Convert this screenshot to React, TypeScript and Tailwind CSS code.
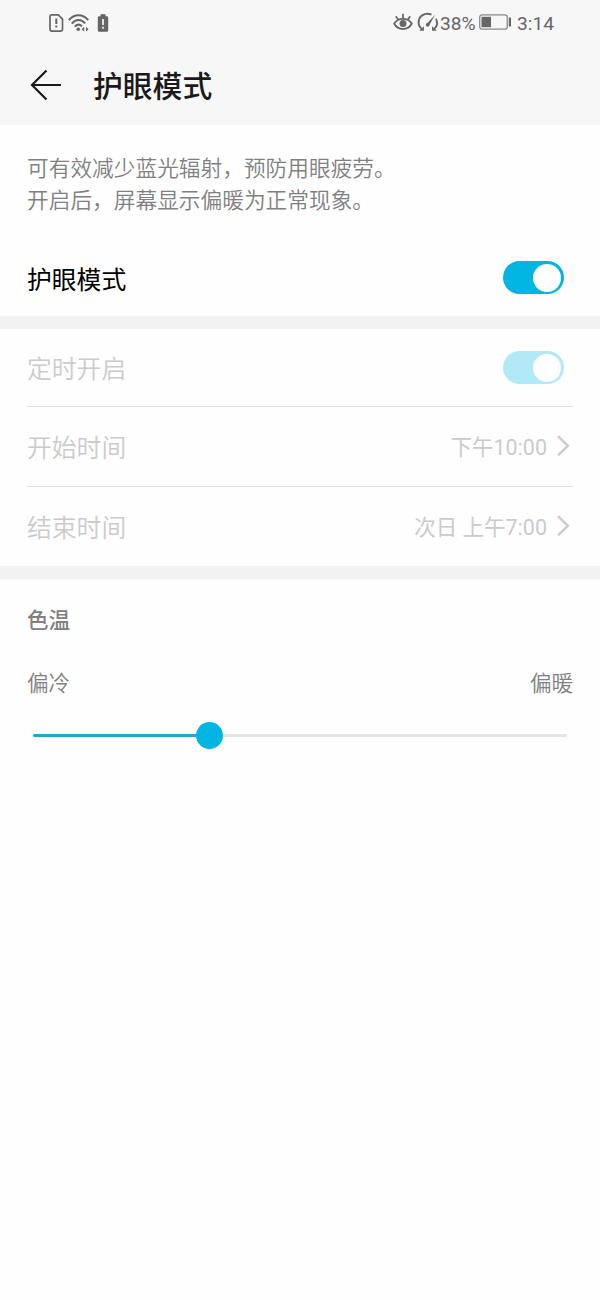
import clsx from "clsx";
import { useState } from "react";

interface SwitchProps {
  checked: boolean;
  disabled?: boolean;
  label: string;
  onChange?: (checked: boolean) => void;
}

/**
 * Pill switch, faded while disabled.
 */
const Switch = ({ checked, disabled, label, onChange }: SwitchProps) => (
  <button
    type="button"
    role="switch"
    aria-checked={checked}
    aria-label={label}
    disabled={disabled}
    onClick={() => onChange?.(!checked)}
    className={clsx(
      "flex h-[33px] w-[61px] items-center rounded-full px-[3px]",
      checked ? "justify-end" : "justify-start",
      !checked && "bg-gray-300",
      checked && (disabled ? "bg-[#b2e9f6]" : "bg-[#00b5e2]")
    )}
  >
    <span className="size-7 rounded-full bg-white" />
  </button>
);

const StatusBar = () => (
  <div className="flex h-[45px] items-center justify-between pr-[46px] pl-[49px] text-[#666]">
    <div className="flex items-center">
      <svg width="15" height="20" viewBox="0 0 15 20" fill="none" stroke="currentColor">
        <path
          d="M3 1.9h6.3l4.2 4.2v10a2 2 0 0 1-2 2H3a2 2 0 0 1-2-2V3.900a2 2 0 0 1 2-2Z"
          strokeWidth="1.700"
        />
        <path d="M7.300 5.500v5.500M7.300 12.600v2" strokeWidth="2" />
      </svg>

      <svg
        width="22"
        height="20"
        viewBox="0 0 22 20"
        fill="none"
        stroke="currentColor"
        className="ml-[4px]"
      >
        <path
          d="M.8 7.200C6.200.7 14.800.7 20.200 7.200M3.800 10.600c4-4.800 9.600-4.800 13.400-.2M6.800 13.600c2.200-2.400 5-2.400 7.200-.4"
          strokeWidth="2"
        />
        <circle cx="10.300" cy="16.200" r="1.800" fill="currentColor" stroke="none" />
        <path
          d="M16.200 13.800v4.800l-2.600-2.400ZM18 13.800v4.800l2.600-2.400Z"
          fill="currentColor"
          stroke="none"
        />
      </svg>

      <svg width="12" height="20" viewBox="0 0 12 20" className="ml-[7px]">
        <path
          d="M3.500 1.200h5v2h1.300A1.400 1.400 0 0 1 11.200 4.600v12.800a1.400 1.400 0 0 1-1.400 1.400H2.200A1.400 1.400 0 0 1 .8 17.400V4.600a1.400 1.400 0 0 1 1.400-1.400h1.300Z"
          fill="currentColor"
        />
        <path d="M6 6v6M6 13.700v2" stroke="#f7f7f7" strokeWidth="1.700" />
      </svg>
    </div>

    <div className="flex items-center">
      <svg width="20" height="20" viewBox="0 0 20 20" fill="none" stroke="currentColor">
        <path
          d="M1.200 11.500C3 8.600 6 6.800 10 6.800s7 1.800 8.800 4.700C17 15 14 17 10 17s-7-2-8.800-5.500Z"
          strokeWidth="1.800"
        />
        <circle cx="10" cy="11.600" r="3.500" fill="currentColor" stroke="none" />
        <path d="M10 1.800V7M2.800 4.200l2.500 3.600M17.200 4.200l-2.500 3.600" strokeWidth="1.700" />
      </svg>

      <svg
        width="22"
        height="20"
        viewBox="0 0 22 20"
        fill="none"
        stroke="currentColor"
        className="ml-[4px]"
      >
        <path
          d="M14.500 2.700C7.800-.3 1.600 4.200 1.600 10.600c0 2.800 1.400 5.400 4.200 6.900M19 6.800c1.900 4.200 1.100 8.300-2.900 10.700"
          strokeWidth="1.900"
        />
        <path d="M2.800 18h3.500v-3.200M19.200 18h-3.500v-3.200" strokeWidth="1.300" />
        <path d="M18.300 2.500 9.500 12l2.300 1.900Z" fill="currentColor" stroke="none" />
        <circle cx="10.700" cy="12.800" r="1.900" fill="currentColor" stroke="none" />
      </svg>

      <span className="ml-px w-[36px] pt-0.5 text-[19.200px] leading-none">38%</span>

      <svg width="33" height="16" viewBox="0 0 33 16" className="ml-[3px]">
        <rect
          x=".7"
          y=".8"
          width="27.600"
          height="14.400"
          rx="2.500"
          fill="none"
          stroke="#8a8a8a"
          strokeWidth="1.300"
        />
        <rect x="2.500" y="2.800" width="9.500" height="10.400" fill="currentColor" />
        <rect x="29.800" y="3.500" width="2.200" height="9" rx=".6" fill="currentColor" />
      </svg>

      <span className="ml-[5px] pt-0.5 text-[19.200px] leading-none">3:14</span>
    </div>
  </div>
);

interface TimeRowProps {
  label: string;
  value: string;
}

const TimeRow = ({ label, value }: TimeRowProps) => (
  <div className="flex h-20 items-center border-t border-[#e0e0e0] text-[#cbcbcb]">
    <span className="pt-[4px] text-[24.800px]">{label}</span>
    <span className="ml-auto pt-[3px] text-[21.500px] font-normal">{value}</span>
    <svg
      width="14"
      height="22"
      viewBox="0 0 14 22"
      fill="none"
      stroke="currentColor"
      strokeWidth="2.400"
      className="mr-[3px] mb-px ml-[9px]"
    >
      <path d="m2 1.200 9.800 9.600L2 20.400" />
    </svg>
  </div>
);

const App = () => {
  const [enabled, setEnabled] = useState(true);
  const [temperature] = useState(33);

  return (
    <div className="min-h-[1300px] w-full bg-[#fefefe] font-['Roboto','Noto_Sans_CJK_SC',sans-serif] font-[350]">
      <header className="h-[125px] bg-[#f7f7f7] font-normal">
        <StatusBar />
        <div className="flex h-20 items-center pl-[30px] text-[#1a1a1a]">
          <svg
            width="32"
            height="32"
            viewBox="0 0 32 32"
            fill="none"
            stroke="currentColor"
            strokeWidth="2.200"
          >
            <path d="M31 16H2M16.500 1.500 2 16l14.500 14.500" />
          </svg>
          <h1 className="ml-[31px] pt-[5px] text-[29.800px] font-medium">护眼模式</h1>
        </div>
      </header>

      <section className="px-[27px]">
        <p className="h-[115px] pt-[28px] text-[21.700px] leading-8 whitespace-nowrap text-[#808080]">
          可有效减少蓝光辐射，预防用眼疲劳。
          <br />
          开启后，屏幕显示偏暖为正常现象。
        </p>
        <div className="flex h-[76px] items-center justify-between pr-[9px] pb-px">
          <span className="pt-[6px] text-[24.800px] font-normal text-black">护眼模式</span>
          <Switch checked={enabled} onChange={setEnabled} label="护眼模式" />
        </div>
      </section>

      {/* schedule */}
      <section className="border-t-[13px] border-[#f2f2f2] px-[27px]">
        <div className="flex h-[77px] items-center justify-between pr-[9px]">
          <span className="pt-[5px] text-[24.800px] text-[#cbcbcb]">定时开启</span>
          <Switch checked disabled label="定时开启" />
        </div>
        <TimeRow label="开始时间" value="下午10:00" />
        <TimeRow label="结束时间" value="次日 上午7:00" />
      </section>

      {/* color temperature */}
      <section className="border-t-[13px] border-[#f2f2f2] px-[27px] text-[21.500px] leading-8 text-[#808080]">
        <h2 className="pt-[26px] font-medium">色温</h2>
        <div className="mt-[31px] flex justify-between">
          <span>偏冷</span>
          <span>偏暖</span>
        </div>
        <div className="mx-[6px] mt-[22px] flex h-[27px] items-center">
          <div
            className="h-[3px] rounded-l-full bg-[#1fa9cc]"
            style={{ width: `${temperature}%` }}
          />
          <div className="-ml-[13px] size-[27px] shrink-0 rounded-full bg-[#00b5e2]" />
          <div className="h-[3px] flex-1 rounded-r-full bg-[#e5e5e5]" />
        </div>
      </section>
    </div>
  );
};

export default App;
